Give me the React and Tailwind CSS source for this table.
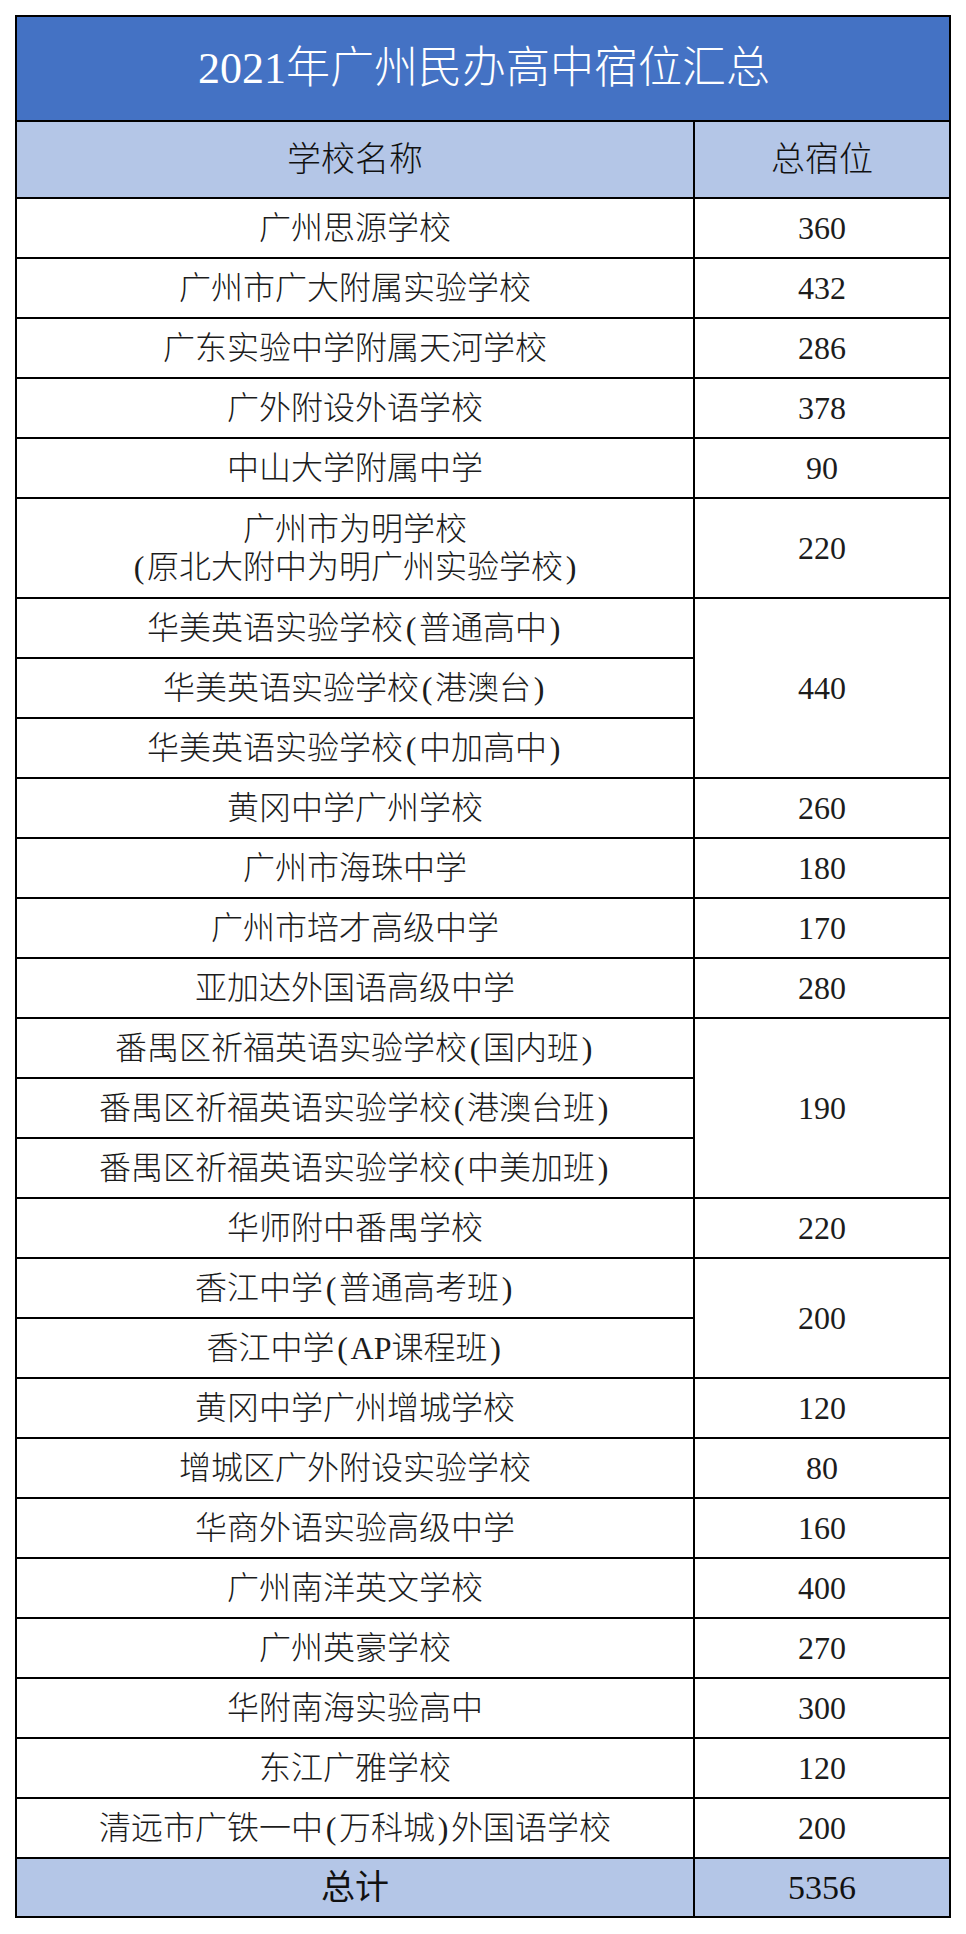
import React from "react";

const rows = [
  { name: "广州思源学校", v: "360" },
  { name: "广州市广大附属实验学校", v: "432" },
  { name: "广东实验中学附属天河学校", v: "286" },
  { name: "广外附设外语学校", v: "378" },
  { name: "中山大学附属中学", v: "90" },
  { name: ["广州市为明学校", "(原北大附中为明广州实验学校)"], v: "220", tall: true },
  { name: "华美英语实验学校(普通高中)", v: "440", span: 3 },
  { name: "华美英语实验学校(港澳台)" },
  { name: "华美英语实验学校(中加高中)" },
  { name: "黄冈中学广州学校", v: "260" },
  { name: "广州市海珠中学", v: "180" },
  { name: "广州市培才高级中学", v: "170" },
  { name: "亚加达外国语高级中学", v: "280" },
  { name: "番禺区祈福英语实验学校(国内班)", v: "190", span: 3 },
  { name: "番禺区祈福英语实验学校(港澳台班)" },
  { name: "番禺区祈福英语实验学校(中美加班)" },
  { name: "华师附中番禺学校", v: "220" },
  { name: "香江中学(普通高考班)", v: "200", span: 2 },
  { name: "香江中学(AP课程班)" },
  { name: "黄冈中学广州增城学校", v: "120" },
  { name: "增城区广外附设实验学校", v: "80" },
  { name: "华商外语实验高级中学", v: "160" },
  { name: "广州南洋英文学校", v: "400" },
  { name: "广州英豪学校", v: "270" },
  { name: "华附南海实验高中", v: "300" },
  { name: "东江广雅学校", v: "120" },
  { name: "清远市广铁一中(万科城)外国语学校", v: "200" },
];

function Text({ t }) {
  const parts = t.split(/([()])/);
  return (
    <span>
      {parts.map((p, i) =>
        p === "(" || p === ")" ? (
          <span key={i} className="inline-block w-[16px] text-center">
            {p}
          </span>
        ) : (
          <span key={i}>{p}</span>
        )
      )}
    </span>
  );
}

export default function App() {
  const cells = [];
  rows.forEach((r, i) => {
    cells.push(
      <div
        key={"n" + i}
        className={
          "bg-white flex flex-col items-center justify-center text-[32px] text-[#1c1c1c] " +
          (r.tall ? "h-[98px] leading-[38px]" : "h-[58px] leading-[40px]")
        }
      >
        {Array.isArray(r.name) ? (
          r.name.map((t, j) => (
            <div key={j}>
              <Text t={t} />
            </div>
          ))
        ) : (
          <Text t={r.name} />
        )}
      </div>
    );
    if (r.v) {
      cells.push(
        <div
          key={"v" + i}
          className={
            "bg-white flex items-center justify-center text-[32px] text-[#1c1c1c] " +
            (r.span === 3 ? "row-span-3" : r.span === 2 ? "row-span-2" : "")
          }
        >
          {r.v}
        </div>
      );
    }
  });

  return (
    <div className="w-[966px] h-[1934px] bg-white pt-[15px] pl-[15px] font-['Liberation_Serif','Noto_Sans_CJK_SC',serif] font-light">
      <div className="w-[936px] grid grid-cols-[676px_254px] gap-[2px] p-[2px] bg-black">
        <div className="col-span-2 h-[103px] bg-[#4472c4] flex items-center justify-center text-white text-[44px] pl-[2px]">
          2021年广州民办高中宿位汇总
        </div>
        <div className="h-[75px] bg-[#b4c6e7] flex items-center justify-center text-[34px] text-[#111]">
          学校名称
        </div>
        <div className="bg-[#b4c6e7] flex items-center justify-center text-[34px] text-[#111]">
          总宿位
        </div>
        {cells}
        <div className="h-[57px] bg-[#b4c6e7] flex items-center justify-center text-[34px] text-[#111] font-normal">
          总计
        </div>
        <div className="bg-[#b4c6e7] flex items-center justify-center text-[34px] text-[#111] font-normal">
          5356
        </div>
      </div>
    </div>
  );
}
